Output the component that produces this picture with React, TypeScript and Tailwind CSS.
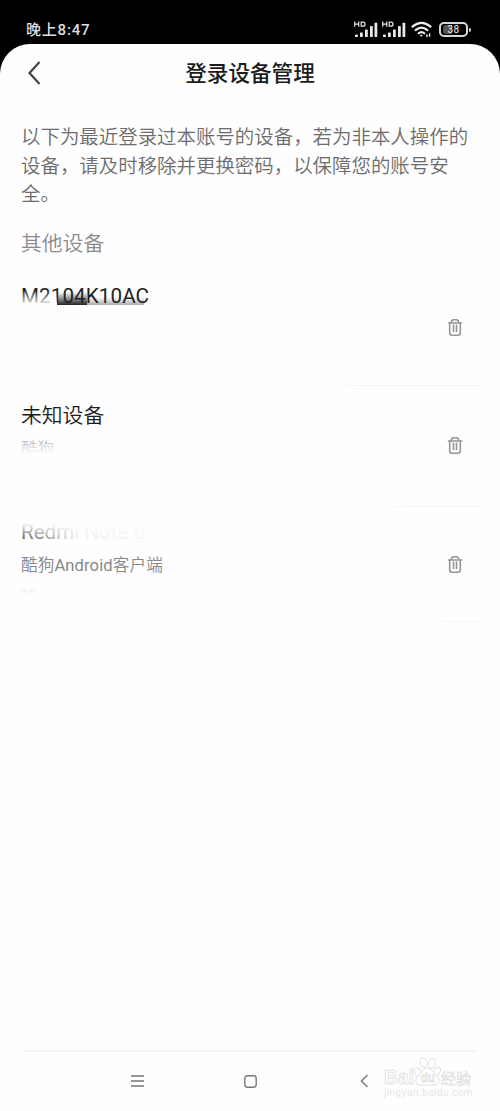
import React from 'react';

const SignalIcon: React.FC = () => (
  <svg width="25" height="17" viewBox="0 0 25 17" fill="#e8e8e8">
    <path d="M.7 .6v5.200M4.700 .6v5.200M.7 3.200h4M7.200 1.200h1.800a2 2 0 0 1 0 4H7.200z" fill="none" stroke="#e8e8e8" strokeWidth="1.2" />
    <rect x="1" y="13.600" width="2.800" height="2.400" rx=".6" />
    <rect x="6" y="11.400" width="2.800" height="4.600" rx=".6" />
    <rect x="11" y="8.400" width="2.800" height="7.600" rx=".6" />
    <rect x="16" y="5" width="2.800" height="11" rx=".6" />
    <rect x="20.500" y="1.800" width="2.800" height="14.200" rx=".6" />
  </svg>
);

const WifiIcon: React.FC = () => (
  <svg width="22" height="17" viewBox="0 0 22 17" fill="none" stroke="#ededed" strokeWidth="2.1" strokeLinecap="round">
    <path d="M1.400 5.600Q10.500-2 19.600 5.600M4.600 9.100Q10.500 4 16.400 9.100M7.700 12.300Q10.500 9.800 13.300 12.300" />
    <path d="M9.600 14.300h1.800L10.500 15.200z" fill="#ededed" strokeWidth=".8" />
    <path d="M15.900 15.500v-1.600M18.600 13v2" strokeWidth="1.500" />
  </svg>
);

const BatteryIcon: React.FC = () => (
  <div className="flex items-center">
    <div className="relative flex h-[15px] w-[29px] items-center justify-center rounded-[5px] border-2 border-[#d8d8d8]">
      <span className="absolute left-[2px] top-[1px] h-[9px] w-[9px] rounded-l-[3px] bg-[#555]" />
      <span className="relative text-[10px] leading-none tracking-[0.5px] text-[#eee]">38</span>
    </div>
    <span className="ml-px h-[4px] w-[2px] rounded-r bg-[#d8d8d8]" />
  </div>
);

const TrashIcon: React.FC = () => (
  <svg width="16" height="19" viewBox="0 0 16 19" fill="none" stroke="#959595" strokeWidth="1.6">
    <path d="M.8 5h14.400M4.200 5Q4.300 1.700 6.800 1.700h2.400q2.500 0 2.600 3.300" />
    <path d="M2.700 5.200v9.600q0 2.500 2.500 2.500h5.600q2.500 0 2.500-2.500V5.200" />
    <path d="M6.500 6.500v7.500M9.500 6.500v7.500" />
  </svg>
);

const Watermark: React.FC = () => (
  <svg width="94" height="46" viewBox="0 0 94 46" fill="#fff" stroke="#e0e0e0" strokeWidth="1">
    <text x="3" y="28" fontSize="21" fontWeight="700" textLength="30" lengthAdjust="spacingAndGlyphs" strokeWidth=".8" fontFamily="Liberation Sans, sans-serif">Bai</text>
    <ellipse cx="36.500" cy="16" rx="3" ry="4.200" transform="rotate(-22 36.500 16)" />
    <ellipse cx="42.500" cy="6.500" rx="3.400" ry="4.800" transform="rotate(-8 42.500 6.500)" />
    <ellipse cx="51" cy="7.500" rx="3.400" ry="4.800" transform="rotate(12 51 7.500)" />
    <ellipse cx="56" cy="15.500" rx="3" ry="4.500" transform="rotate(28 56 15.500)" />
    <path d="M46.500 12c-4 0-5 4-8.500 7-4.500 4-4.500 10 2 10h13c6.500 0 6.500-6 2-10-3-3-4.500-7-8.500-7z" />
    <text x="39.500" y="26" fontSize="12" fontWeight="700" strokeWidth=".8" fontFamily="Liberation Sans, sans-serif">du</text>
    <text x="60" y="28" fontSize="15" strokeWidth=".7" fontFamily="Noto Sans CJK SC, sans-serif">经验</text>
    <text x="3" y="40" fontSize="10" textLength="88" fill="#e6e6e6" stroke="none" fontFamily="Liberation Sans, sans-serif">jingyan.baidu.com</text>
  </svg>
);

const App: React.FC = () => {
  return (
    <div className="flex h-[1111px] w-[500px] flex-col overflow-hidden bg-black font-['Roboto','Noto_Sans_CJK_SC',sans-serif]">
      {/* Status bar */}
      <div className="flex h-[44px] shrink-0 items-start justify-between pl-[26px] pr-[29px]">
        <span className="mt-[18px] text-[15px] font-medium leading-6 tracking-[0.8px] text-[#dedede]">晚上8:47</span>
        <div className="mt-[21px] flex items-center">
          <SignalIcon />
          <span className="ml-[3px]"><SignalIcon /></span>
          <span className="ml-[4px] mr-[6px]"><WifiIcon /></span>
          <BatteryIcon />
        </div>
      </div>

      <div className="flex flex-1 flex-col rounded-t-[30px] bg-[#fefefe]">
        <header className="grid h-[58px] shrink-0 grid-cols-3 items-center">
          <svg className="ml-[27px]" width="16" height="26" viewBox="0 0 16 26" fill="none" stroke="#444" strokeWidth="2.2">
            <path d="M12.500 2L2.500 13l10 11" />
          </svg>
          <h1 className="whitespace-nowrap pt-[2px] text-center text-[21.6px] font-medium text-[#1c1c1c]">登录设备管理</h1>
        </header>

        <main className="flex-1 pl-[21px] pr-[20px] font-[350]">
          <p className="mt-[22px] h-[86px] text-[19.45px] leading-[28.500px] text-[#6c6c6c]">
            以下为最近登录过本账号的设备，若为非本人操作的
            <br />
            设备，请及时移除并更换密码，以保障您的账号安
            <br />
            全。
          </p>
          <h2 className="mt-[19px] text-[20.8px] leading-[30px] text-[#8b8b8b]">其他设备</h2>

          <div className="mt-[22px] flex h-[104px] justify-between">
            <div className="relative h-[30px] text-[20.6px] font-normal leading-[30px] tracking-[0.1px] text-[#222]">
              <span className="absolute left-[36px] top-[11px] h-[13px] w-[30px] bg-linear-to-b from-transparent to-[#222]" />
              <span className="absolute left-[66px] top-[16px] h-[8px] w-[57px] bg-linear-to-b from-transparent to-[#aaa]" />
              <span className="relative">M2104K10AC</span>
              <span className="absolute left-0 top-[9px] h-[16px] w-[36px] bg-linear-to-b from-transparent to-white" />
            </div>
            <span className="mr-[17px] mt-[37px]"><TrashIcon /></span>
          </div>
          <div className="ml-auto h-px w-[147px] bg-linear-to-r from-transparent via-[#f2f2f2] via-20% to-[#f2f2f2]" />

          <div className="flex h-[120px] justify-between">
            <div className="pt-[15px]">
              <div className="text-[20.8px] leading-[30px] text-[#1c1c1c]">未知设备</div>
              <div className="relative mt-[6px] h-[28px] text-[16.5px] leading-[26px] text-[#b5b5b5]">
                酷狗
                <span className="absolute left-0 top-0 h-full w-[40px] bg-linear-to-b from-[#fefefe]/20 from-20% to-[#fefefe] to-60%" />
              </div>
            </div>
            <span className="mr-[17px] mt-[50px]"><TrashIcon /></span>
          </div>
          <div className="ml-auto h-px w-[95px] bg-linear-to-r from-transparent via-[#f4f4f4] via-20% to-[#f4f4f4]" />

          <div className="flex h-[114px] justify-between">
            <div className="pt-[10px]">
              <div className="relative h-[30px] text-[20.6px] font-normal leading-[30px] text-[#444]">
                Redmi Note 8
                <span className="absolute inset-0 bg-linear-to-b from-[#fefefe] from-20% to-transparent to-80%" />
                <span className="absolute inset-0 bg-linear-to-r from-transparent via-[#fefefe]/90 via-40% to-[#fefefe]/95" />
              </div>
              <div className="mt-[6px] text-[16.6px] leading-[26px] tracking-[0.1px] text-[#888]">
                酷狗<span className="font-normal">Android</span>客户端
              </div>
              <div className="relative mt-[5px] h-[24px] w-[42px] overflow-hidden text-[14px] leading-[24px] text-[#ccc]">
                20
                <span className="absolute inset-0 bg-linear-to-b from-transparent from-10% to-[#fefefe] to-45%" />
              </div>
            </div>
            <span className="mr-[17px] mt-[48px]"><TrashIcon /></span>
          </div>
          <div className="ml-auto h-px w-[37px] bg-[#f5f5f5]" />
        </main>

        {/* System navigation */}
        <footer className="relative mx-[23px] h-[61px] shrink-0 border-t-2 border-[#f5f5f5]">
          <div className="flex h-[58px] items-center pl-[108px]">
            <svg width="13" height="12" viewBox="0 0 13 12" stroke="#777" strokeWidth="1.4">
              <path d="M0 1h13M0 6h13M0 11h13" />
            </svg>
            <svg className="ml-[100px]" width="13" height="13" viewBox="0 0 13 13" fill="none" stroke="#777" strokeWidth="1.4">
              <rect x=".8" y=".8" width="11.400" height="11.400" rx="2.600" />
            </svg>
            <svg className="ml-[103px]" width="9" height="14" viewBox="0 0 9 14" fill="none" stroke="#808080" strokeWidth="1.600">
              <path d="M7.500 1L1.500 7l6 6" />
            </svg>
          </div>
          <div className="absolute left-[358px] top-[4px]"><Watermark /></div>
        </footer>
      </div>
    </div>
  );
};

export default App;
